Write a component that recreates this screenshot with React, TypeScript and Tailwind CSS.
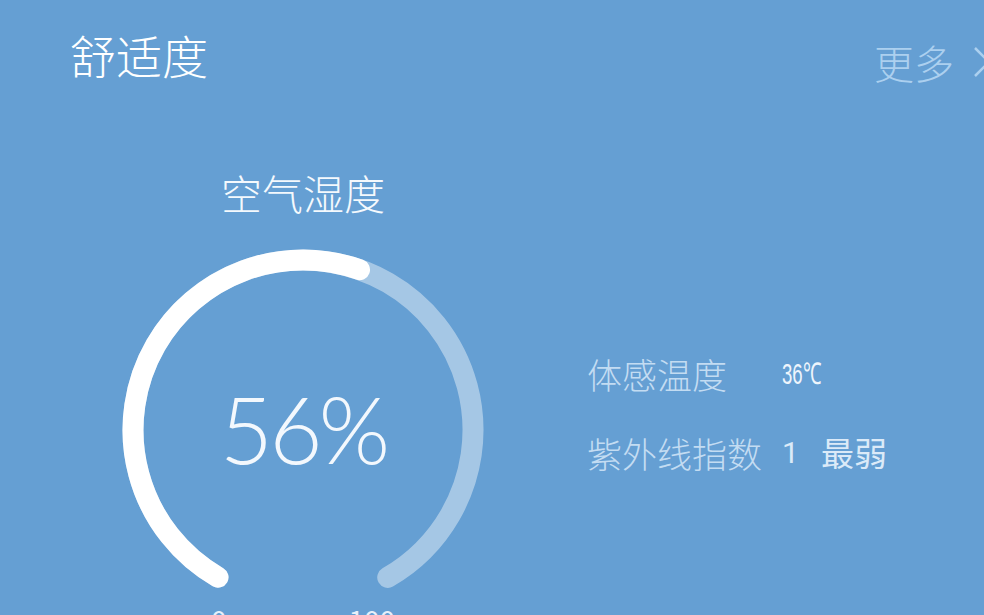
import React from "react";

const cjk = { fontFamily: '"Noto Sans CJK SC", "Noto Sans", sans-serif' };

function Ring({ percent }: { percent: number }) {
  const r = 170;
  const c = 2 * Math.PI * r;
  const arc = (c * 300) / 360;
  const fill = arc * (percent / 100);
  return (
    <svg width="360" height="360" viewBox="0 0 360 360" className="overflow-visible">
      <g transform="rotate(120 180 180)">
        <circle
          cx="180"
          cy="180"
          r={r}
          fill="none"
          stroke="rgba(255,255,255,0.42)"
          strokeWidth="21"
          strokeLinecap="round"
          strokeDasharray={`${arc} ${c}`}
        />
        <circle
          cx="180"
          cy="180"
          r={r}
          fill="none"
          stroke="#ffffff"
          strokeWidth="21"
          strokeLinecap="round"
          strokeDasharray={`${fill + 4} ${c}`}
        />
      </g>
    </svg>
  );
}

export default function App() {
  return (
    <div className="w-[984px] h-[615px] overflow-hidden bg-[#659fd3] text-white flex flex-col" style={cjk}>
      <div className="flex justify-between items-start pl-[70px] pt-[31px]">
        <div className="text-[46px] leading-none font-light text-white">舒适度</div>
        <div className="flex items-center mt-[11px] mr-[-14px] text-[#acd0ef]">
          <span className="text-[40px] leading-none font-light">更多</span>
          <svg width="26" height="40" viewBox="0 0 26 40" className="ml-[18px]">
            <path d="M3 6 L17 20 L3 34" fill="none" stroke="#acd0ef" strokeWidth="2.5" />
          </svg>
        </div>
      </div>
      <div className="flex pl-[123px] mt-[90px]">
        <div className="w-[360px] flex flex-col items-center">
          <div className="text-[41px] leading-none font-light text-[#f4f9fd]">空气湿度</div>
          <div className="relative mt-[37px] w-[360px] h-[360px]">
            <Ring percent={56} />
            <div
              className="absolute inset-0 flex items-center justify-center text-[92px] leading-none font-light text-[#f3f8fd] tracking-[-4px]"
              style={{ fontFamily: 'Lato, "Open Sans", sans-serif' }}
            >
              <span className="-mt-[2px]">56%</span>
            </div>
          </div>
          <div className="w-full flex justify-between px-[88px] -mt-[5px] text-[28px] leading-none text-[#e6f0fa]">
            <span>0</span>
            <span>100</span>
          </div>
        </div>
        <div className="ml-[104px] mt-[184px] flex flex-col gap-[44px]">
          <div className="flex items-center text-[35px] leading-none text-[#c3dcf2]">
            <span className="font-light">体感温度</span>
            <span
              className="inline-block ml-[55px] text-[30px] text-[#eef5fc] scale-x-[0.62] origin-left"
              style={{ fontFamily: '"Liberation Sans", sans-serif' }}
            >
              36℃
            </span>
          </div>
          <div className="flex items-center text-[35px] leading-none text-[#c3dcf2]">
            <span className="font-light">紫外线指数</span>
            <span className="ml-[20px] text-[30px] text-[#dbeaf8]" style={{ fontFamily: 'Roboto, sans-serif' }}>1</span>
            <span className="ml-[22px] text-[33px] text-[#dbeaf8]">最弱</span>
          </div>
        </div>
      </div>
    </div>
  );
}
